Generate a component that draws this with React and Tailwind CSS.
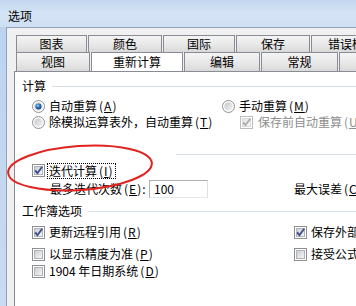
import React from "react";

const F = "font-['Noto_Sans_CJK_SC',sans-serif]";

function Check({ checked, disabled }) {
  return (
    <svg width="13" height="13" viewBox="0 0 13 13" className="shrink-0 block">
      <defs>
        <linearGradient id="cbIn" x1="0" y1="0" x2="1" y2="1">
          <stop offset="0" stopColor="#c9ccd2" />
          <stop offset="1" stopColor="#f8f8f8" />
        </linearGradient>
        <linearGradient id="cbInD" x1="0" y1="0" x2="1" y2="1">
          <stop offset="0" stopColor="#e2e3e5" />
          <stop offset="1" stopColor="#fafafa" />
        </linearGradient>
      </defs>
      <rect x="0.5" y="0.5" width="12" height="12" fill="#fff" stroke={disabled ? "#bcbcbc" : "#8e8f8f"} />
      <rect x="2.5" y="2.5" width="8" height="8" fill={disabled ? "url(#cbInD)" : "url(#cbIn)"} stroke={disabled ? "#d9d9d9" : "#b0b4ba"} />
      {checked && (
        <path d="M3.2 6.4 L5.4 9.2 L10.2 2.8" fill="none" stroke={disabled ? "#adadad" : "#3d4f8a"} strokeWidth="1.9" strokeLinejoin="round" />
      )}
    </svg>
  );
}

function Radio({ checked }) {
  return (
    <svg width="13" height="13" viewBox="0 0 13 13" className="shrink-0 block">
      <defs>
        <linearGradient id="rOut" x1="0" y1="0" x2="1" y2="1">
          <stop offset="0" stopColor="#c3c6cb" />
          <stop offset="1" stopColor="#f5f5f5" />
        </linearGradient>
        <radialGradient id="rDot" cx="0.4" cy="0.35" r="0.7">
          <stop offset="0" stopColor="#9fd3f5" />
          <stop offset="0.45" stopColor="#2a78bd" />
          <stop offset="1" stopColor="#103a6a" />
        </radialGradient>
      </defs>
      <circle cx="6.5" cy="6.5" r="6" fill="#fff" stroke="#8e8f8f" />
      <circle cx="6.5" cy="6.5" r="4.3" fill="url(#rOut)" />
      {checked && <circle cx="6.5" cy="6.5" r="3" fill="url(#rDot)" />}
    </svg>
  );
}

function M({ k }) {
  return (
    <span className="ml-[2px] tracking-[1px]">
      (<span className="underline">{k}</span>)
    </span>
  );
}

function Tab({ w, children, selected }) {
  return (
    <div
      className={
        "shrink-0 h-full flex items-center justify-center whitespace-nowrap border-l border-r border-t border-[#898c95] " +
        (selected
          ? "bg-white relative z-10 -mb-[1px] border-b-0"
          : "bg-gradient-to-b from-[#f4f4f4] via-[#e9e9e9] to-[#d9d9d9]")
      }
      style={{ width: w }}
    >
      {children}
    </div>
  );
}

function GroupHead({ label }) {
  return (
    <div className="flex items-center h-[14px] gap-[6px]">
      <span className="shrink-0">{label}</span>
      <div className="flex-1 h-px bg-[#d5dfe5]" />
    </div>
  );
}

export default function App() {
  return (
    <div className={"relative w-[356px] h-[306px] overflow-hidden bg-gradient-to-b from-[#bcd2ee] to-[#c9dbf1] text-[12px] leading-[12px] text-black " + F}>
      {/* title bar */}
      <div className="h-[27px] pl-[8px] pt-[10px] bg-gradient-to-b from-[#c3d7ef] via-[#d4e3f5] to-[#cfdff3]">
        <span>选项</span>
      </div>
      {/* client */}
      <div className="ml-[6px] w-[420px] h-[279px] border-l border-t border-[#8da2bc] bg-[#f0f0f0] pl-[7px] pt-[7px] flex flex-col">
        {/* tabs */}
        <div className="pl-[2px] flex flex-col">
          <div className="flex gap-[1px] h-[17px]">
            <Tab w={71}>图表</Tab>
            <Tab w={74}>颜色</Tab>
            <Tab w={72}>国际</Tab>
            <Tab w={74}>保存</Tab>
            <Tab w={82}>错误检查</Tab>
          </div>
          <div className="flex gap-[1px] h-[19px]">
            <Tab w={74}>视图</Tab>
            <Tab w={92} selected>重新计算</Tab>
            <Tab w={76}>编辑</Tab>
            <Tab w={77}>常规</Tab>
            <Tab w={130}>1-2-3 的帮助</Tab>
          </div>
        </div>
        {/* panel */}
        <div className="flex-1 border-l border-t border-[#898c95] bg-white pl-[7px] flex flex-col">
          <div className="mt-[7px]">
            <GroupHead label="计算" />
          </div>
          <div className="mt-[5px] flex h-[16px] items-center pl-[10px]">
            <div className="w-[190px] shrink-0 flex items-center gap-[4px]">
              <Radio checked />
              <span>自动重算<M k="A" /></span>
            </div>
            <div className="shrink-0 flex items-center gap-[4px] whitespace-nowrap">
              <Radio />
              <span>手动重算<M k="M" /></span>
            </div>
          </div>
          <div className="flex h-[16px] items-center pl-[10px]">
            <div className="w-[208px] shrink-0 flex items-center gap-[4px]">
              <Radio />
              <span className="whitespace-nowrap">除模拟运算表外，自动重算<M k="T" /></span>
            </div>
            <div className="shrink-0 flex items-center gap-[5px] text-[#8d8d8d] whitespace-nowrap">
              <Check checked disabled />
              <span>保存前自动重算<M k="U" /></span>
            </div>
          </div>
          <div className="mt-[24px] ml-[154px] h-px bg-[#d5dfe5]" />
          <div className="mt-[7px] h-[17px] flex items-center pl-[10px] gap-[2px]">
            <Check checked />
            <span className="border border-dotted border-black h-[16px] flex items-center pl-[1px] pr-[1px] whitespace-nowrap">
              迭代计算<M k="I" />
            </span>
          </div>
          <div className="h-[19px] flex items-center pl-[28px]">
            <span className="w-[99px] shrink-0 whitespace-nowrap">
              最多迭代次数<M k="E" />:
            </span>
            <div className="w-[59px] shrink-0 h-[18px] border border-[#abadb3] border-r-[#dbdfe6] border-b-[#e3e9ef] bg-white pl-[4px] flex items-center">
              100
            </div>
            <span className="ml-[86px] shrink-0 whitespace-nowrap">
              最大误差<M k="C" />:
            </span>
          </div>
          <div className="mt-[6px]">
            <GroupHead label="工作簿选项" />
          </div>
          <div className="mt-[6px] h-[16px] flex items-center pl-[10px]">
            <div className="w-[262px] shrink-0 flex items-center gap-[4px]">
              <Check checked />
              <span>更新远程引用<M k="R" /></span>
            </div>
            <div className="shrink-0 flex items-center gap-[4px] whitespace-nowrap">
              <Check checked />
              <span>保存外部链接值</span>
            </div>
          </div>
          <div className="mt-[6px] h-[16px] flex items-center pl-[10px]">
            <div className="w-[262px] shrink-0 flex items-center gap-[4px]">
              <Check />
              <span>以显示精度为准<M k="P" /></span>
            </div>
            <div className="shrink-0 flex items-center gap-[4px] whitespace-nowrap">
              <Check />
              <span>接受公式标志</span>
            </div>
          </div>
          <div className="mt-[1px] h-[16px] flex items-center pl-[10px]">
            <div className="w-[262px] shrink-0 flex items-center gap-[4px]">
              <Check />
              <span className="whitespace-nowrap">1904 年日期系统<M k="D" /></span>
            </div>
          </div>
        </div>
      </div>
      {/* red annotation ellipse */}
      <svg className="absolute left-0 top-0 pointer-events-none" width="356" height="306" viewBox="0 0 356 306">
        <ellipse cx="80" cy="168" rx="72" ry="22" fill="none" stroke="#e0231f" strokeWidth="2" transform="rotate(-4 80 168)" />
      </svg>
    </div>
  );
}
